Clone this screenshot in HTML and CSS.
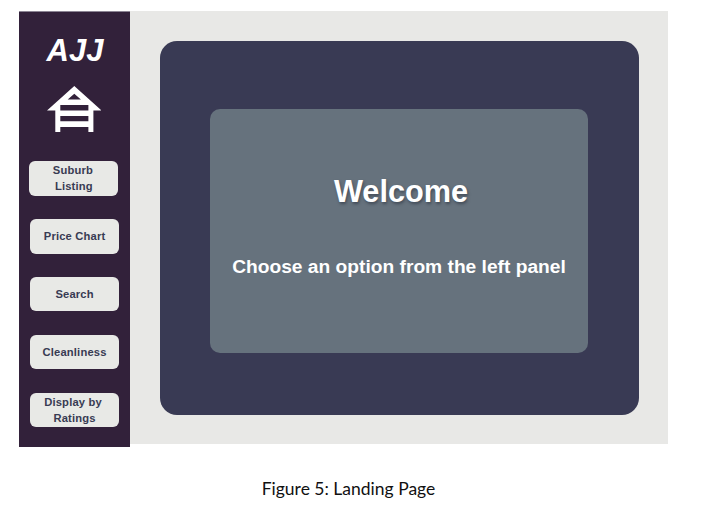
FILE: index.html
```html
<!DOCTYPE html>
<html lang="en">
<head>
<meta charset="utf-8">
<title>Landing Page</title>
<link rel="stylesheet" href="styles.css">
</head>
<body>
<figure class="figure">
  <div class="app">
    <nav class="sidebar">
      <div class="brand">AJJ</div>
      <svg class="house" viewBox="0 0 54.4 46.4" aria-hidden="true">
        <path fill="#fff" fill-rule="evenodd" d="M27.3 0L54.4 24.4H46.4V46.4H41.4V41H13.3V46.4H8.3V24.4H0ZM27.3 7.7L20.7 13.4H33.9ZM13.3 19V24.4H41.4V19ZM13.3 30V35.3H41.4V30Z"/>
      </svg>
      <div class="menu">
        <button class="item first"><span class="nudge-sm">Suburb</span><br>Listing</button>
        <button class="item">Price Chart</button>
        <button class="item">Search</button>
        <button class="item">Cleanliness</button>
        <button class="item last"><span class="nudge">Display by</span><br>Ratings</button>
      </div>
    </nav>
    <main class="content">
      <section class="panel">
        <div class="card">
          <h1 class="title">Welcome</h1>
          <p class="hint">Choose an option from the left panel</p>
        </div>
      </section>
    </main>
  </div>
  <figcaption class="caption">Figure 5: Landing Page</figcaption>
</figure>
</body>
</html>
```
FILE: styles.css
```css
body {
  margin: 0;
  background: #fff;
  font-family: "Liberation Sans", Arial, sans-serif;
}

.figure {
  margin: 0;
  padding: 11px 0 0 18.5px;
}

.app {
  display: flex;
  align-items: flex-start;
  width: 649px;
}

.sidebar {
  box-sizing: border-box;
  flex: none;
  display: flex;
  flex-direction: column;
  align-items: center;
  width: 111.5px;
  height: 436px;
  padding-top: 22px;
  background: #32213a;
  border-top: 1px solid #8c8594;
}

.brand {
  margin-left: 1.5px;
  color: #fff;
  font-size: 31px;
  line-height: 34px;
  font-weight: bold;
  font-style: italic;
}

.house {
  width: 54.4px;
  height: 46.4px;
  margin-top: 18px;
}

.menu {
  display: flex;
  flex-direction: column;
  gap: 23.5px;
  margin-top: 28.9px;
  margin-left: 0.6px;
}

.item {
  box-sizing: border-box;
  width: 89.2px;
  height: 34.4px;
  padding: 0;
  border: 0;
  border-radius: 6px;
  background: #e8e9e6;
  color: #383b53;
  font: bold 11.2px/16px "Liberation Sans", Arial, sans-serif;
  letter-spacing: 0.17px;
}

.first {
  margin-left: -0.7px;
  margin-right: 0.7px;
}

.nudge {
  margin-left: -3px;
}

.nudge-sm {
  margin-left: -2px;
}

.content {
  box-sizing: border-box;
  flex: 1;
  height: 433px;
  padding: 30px 28.5px 29px 30px;
  background: #e8e8e6;
}

.panel {
  box-sizing: border-box;
  height: 373.5px;
  padding: 67.5px 51px 62px 50px;
  border-radius: 17px;
  background: #393a54;
}

.card {
  box-sizing: border-box;
  height: 244px;
  padding-top: 65px;
  border-radius: 10px;
  background: #66727d;
  color: #fff;
  text-align: center;
}

.title {
  margin: 0 0 0 4px;
  font-size: 30.7px;
  line-height: 36px;
  text-shadow: 1px 2px 3px rgba(30, 35, 50, 0.5);
}

.hint {
  margin: 45px 0 0;
  font-size: 19.2px;
  line-height: 24px;
  font-weight: bold;
  white-space: nowrap;
}

.caption {
  width: 660px;
  margin-top: 30px;
  color: #111;
  font: 17.5px/24px Lato, sans-serif;
  text-align: center;
}
```
